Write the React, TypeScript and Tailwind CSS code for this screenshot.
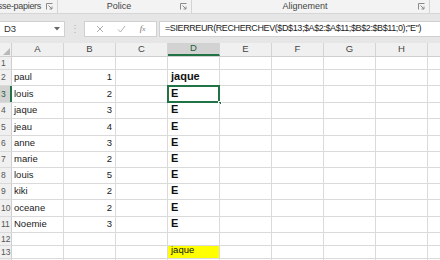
import React from 'react';

type Row = {
  n: number;
  h: string;
  a?: string;
  b?: string;
  d?: string;
  bold?: boolean;
  yellow?: boolean;
};

const rows: Row[] = [
  { n: 1, h: 'h-[13px]' },
  { n: 2, h: 'h-[16px]', a: 'paul', b: '1', d: 'jaque', bold: true },
  { n: 3, h: 'h-[17px]', a: 'louis', b: '2', d: 'E', bold: true },
  { n: 4, h: 'h-[16px]', a: 'jaque', b: '3', d: 'E', bold: true },
  { n: 5, h: 'h-[17px]', a: 'jeau', b: '4', d: 'E', bold: true },
  { n: 6, h: 'h-[16px]', a: 'anne', b: '3', d: 'E', bold: true },
  { n: 7, h: 'h-[16px]', a: 'marie', b: '2', d: 'E', bold: true },
  { n: 8, h: 'h-[16px]', a: 'louis', b: '5', d: 'E', bold: true },
  { n: 9, h: 'h-[16px]', a: 'kiki', b: '2', d: 'E', bold: true },
  { n: 10, h: 'h-[17px]', a: 'oceane', b: '2', d: 'E', bold: true },
  { n: 11, h: 'h-[16px]', a: 'Noemie', b: '3', d: 'E', bold: true },
  { n: 12, h: 'h-[13px]' },
  { n: 13, h: 'h-[13px]', d: 'jaque', yellow: true },
  { n: 14, h: 'h-[16px]' },
];

const cols = ['A', 'B', 'C', 'D', 'E', 'F', 'G', 'H'];

function Launcher() {
  return (
    <svg width="7" height="7" viewBox="0 0 7 7" className="shrink-0">
      <path d="M0.5 6.5V0.5H6.5" fill="none" stroke="#8a8a8a" strokeWidth="1" />
      <path d="M2.5 2.5L6 6M6 3.5V6H3.5" fill="none" stroke="#8a8a8a" strokeWidth="1" />
    </svg>
  );
}

function RibbonGroup({ label, className }: { label: string; className: string }) {
  return (
    <div className={`flex items-center border-r border-[#d4d4d4] h-full pr-[4px] ${className}`}>
      <div className="flex-1 text-center text-[9px] text-[#444] whitespace-nowrap">{label}</div>
      <Launcher />
    </div>
  );
}

export default function App() {
  return (
    <div
      className="w-[440px] h-[260px] overflow-hidden bg-white"
      style={{ fontFamily: '"Liberation Sans", Arial, sans-serif' }}
    >
      {/* ruban */}
      <div className="flex h-[14px] bg-[#f3f3f3] border-b border-[#d6d6d6] overflow-hidden">
        <div className="flex items-center justify-end w-[58px] shrink-0 h-full border-r border-[#d4d4d4] pr-[4px] overflow-hidden">
          <span className="text-[9px] text-[#444] whitespace-nowrap tracking-[-0.3px] mr-[5px]">Presse-papiers</span>
          <Launcher />
        </div>
        <RibbonGroup label="Police" className="w-[134px] shrink-0" />
        <RibbonGroup label="Alignement" className="w-[238px] shrink-0" />
      </div>

      {/* barre de formule */}
      <div className="flex items-center h-[29px] bg-[#e6e6e6] pt-[1px]">
        <div className="flex items-center w-[65px] h-[16px] bg-white border border-[#d0d0d0] border-l-0 pl-[4px] pr-[4px]">
          <span className="flex-1 text-[9.5px] text-[#333]">D3</span>
          <svg width="6" height="4" viewBox="0 0 6 4">
            <path d="M0 0H6L3 3.5Z" fill="#666" />
          </svg>
        </div>
        <div className="w-[19px] flex justify-center text-[#b5b5b5] text-[10px] leading-none">⋮</div>
        <div className="flex items-center justify-around w-[73px] h-[16px] bg-white border border-[#d0d0d0] px-[4px]">
          <svg width="8" height="8" viewBox="0 0 8 8">
            <path d="M1 1L7 7M7 1L1 7" stroke="#b0b0b0" strokeWidth="1" />
          </svg>
          <svg width="9" height="8" viewBox="0 0 9 8">
            <path d="M1 4.5L3.5 7L8 1" fill="none" stroke="#b0b0b0" strokeWidth="1" />
          </svg>
          <span className="text-[9px] italic text-[#777]" style={{ fontFamily: '"Liberation Serif", serif' }}>
            f<span className="text-[7px]">x</span>
          </span>
        </div>
        <div className="flex-1 flex items-center h-[16px] bg-white border border-[#d0d0d0] border-r-0 ml-[2px] pl-[5px] text-[9px] tracking-[-0.4px] text-[#222] whitespace-nowrap overflow-hidden">
          =SIERREUR(RECHERCHEV($D$13;$A$2:$A$11;$B$2:$B$11;0);"E")
        </div>
      </div>

      {/* en-têtes de colonnes */}
      <div className="flex h-[14px] bg-[#f0f0f0] border-b border-[#cfcfcf]">
        <div className="relative w-[12px] shrink-0 border-r border-[#cfcfcf]">
          <svg width="7" height="7" viewBox="0 0 7 7" className="absolute right-[1px] bottom-[1px]">
            <path d="M7 0V7H0Z" fill="#b9b9b9" />
          </svg>
        </div>
        {cols.map((c) => (
          <div
            key={c}
            className={`w-[52px] shrink-0 flex items-center justify-center text-[9.5px] border-r border-[#d4d4d4] ${
              c === 'D' ? 'bg-[#d2d2d2] text-[#1e5f3a] border-b-2 border-b-[#217346]' : 'text-[#444]'
            }`}
          >
            {c}
          </div>
        ))}
        <div className="flex-1" />
      </div>

      {/* lignes */}
      {rows.map((r) => (
        <div key={r.n} className={`flex ${r.h} border-b border-[#dadada]`}>
          <div
            className={`w-[12px] shrink-0 flex items-center text-[8.5px] pl-[1px] ${
              r.n === 3
                ? 'bg-[#d2d2d2] text-[#1e5f3a] border-r-2 border-[#217346]'
                : 'bg-[#f0f0f0] text-[#555] border-r border-[#cfcfcf]'
            }`}
          >
            {r.n < 14 ? r.n : ''}
          </div>
          <div className="w-[52px] shrink-0 border-r border-[#dadada] flex items-end pl-[2px] pb-[1px] text-[9.5px] text-[#222]">
            {r.a}
          </div>
          <div className="w-[52px] shrink-0 border-r border-[#dadada] flex items-end justify-end pr-[3px] pb-[1px] text-[9.5px] text-[#222]">
            {r.b}
          </div>
          <div className="w-[52px] shrink-0 border-r border-[#dadada]" />
          <div
            className={`relative w-[52px] shrink-0 border-r border-[#dadada] flex items-end pl-[3px] pb-[1px] text-[#111] ${
              r.bold ? 'font-bold text-[11px]' : 'text-[9.5px]'
            } ${r.yellow ? 'bg-[#ffff00]' : ''}`}
          >
            {r.d}
            {r.n === 3 && (
              <>
                <div className="absolute left-[-1px] top-[-1px] right-[-1px] bottom-[-1px] border-2 border-[#217346]" />
                <div className="absolute right-[-3px] bottom-[-3px] w-[4px] h-[4px] bg-[#217346] border border-white" />
              </>
            )}
          </div>
          {cols.slice(4).map((c) => (
            <div key={c} className="w-[52px] shrink-0 border-r border-[#dadada]" />
          ))}
        </div>
      ))}
    </div>
  );
}
